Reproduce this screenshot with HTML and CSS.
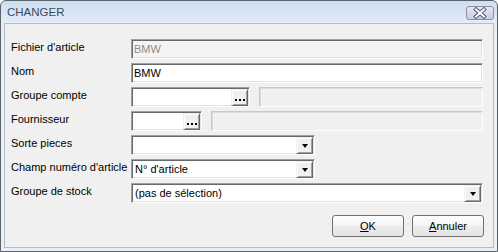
FILE: index.html
```html
<!DOCTYPE html>
<html lang="fr">
<head>
<meta charset="utf-8">
<title>CHANGER</title>
<link rel="stylesheet" href="styles.css">
</head>
<body>
<div class="window">
  <div class="titlebar">
    <span class="title">CHANGER</span>
    <span class="close">
      <svg width="28" height="14" viewBox="0 0 28 14">
        <path d="M10 3.5 L18 10.5 M18 3.5 L10 10.5" stroke="#555a6c" stroke-width="4" stroke-linecap="square" fill="none"/>
        <path d="M10 3.5 L18 10.5 M18 3.5 L10 10.5" stroke="#ffffff" stroke-width="2" stroke-linecap="square" fill="none"/>
      </svg>
    </span>
  </div>
  <div class="client">
    <div class="form">
      <div class="label">Fichier d'article</div>
      <div class="field disabled">BMW</div>

      <div class="label">Nom</div>
      <div class="field">BMW</div>

      <div class="label">Groupe compte</div>
      <div class="pair">
        <div class="field lookup w-gc"><span class="val"></span><span class="btn dots"><i></i><i></i><i></i></span></div>
        <div class="field flat"></div>
      </div>

      <div class="label">Fournisseur</div>
      <div class="pair">
        <div class="field lookup w-f"><span class="val"></span><span class="btn dots"><i></i><i></i><i></i></span></div>
        <div class="field flat"></div>
      </div>

      <div class="label">Sorte pieces</div>
      <div class="row-left">
        <div class="field combo w-c"><span class="val"></span><span class="btn arrow"><b></b></span></div>
      </div>

      <div class="label">Champ numéro d'article</div>
      <div class="row-left">
        <div class="field combo w-c"><span class="val">N° d'article</span><span class="btn arrow"><b></b></span></div>
      </div>

      <div class="label">Groupe de stock</div>
      <div class="field combo"><span class="val">(pas de sélection)</span><span class="btn arrow"><b></b></span></div>
    </div>
    <div class="actions">
      <button class="pbtn"><u>O</u>K</button>
      <button class="pbtn"><u>A</u>nnuler</button>
    </div>
  </div>
</div>
</body>
</html>
```

FILE: styles.css
```css
* { box-sizing: border-box; }
html, body { margin: 0; padding: 0; }
body {
  width: 498px;
  height: 252px;
  font-family: "Liberation Sans", Arial, sans-serif;
  font-size: 11px;
  color: #000;
  background: #ffffff;
}
.window {
  width: 498px;
  height: 252px;
  border: 1px solid #5d636b;
  border-radius: 6px 6px 0 0;
  background: linear-gradient(#cedff1 0px, #d8e6f4 12px, #e4edf8 22px, #e9f0f8 40px);
  padding: 0 3px 3px 3px;
  display: flex;
  flex-direction: column;
}
.titlebar {
  height: 22px;
  display: flex;
  align-items: flex-start;
  justify-content: space-between;
  margin: 0 -3px;
  padding: 0 3px 0 3px;
}
.title {
  font-size: 11.5px;
  color: #3c4a5c;
  padding: 5px 0 0 3px;
}
.close {
  width: 28px;
  height: 14px;
  margin-top: 5px;
  border: 1px solid #8b8fa3;
  border-radius: 3px;
  background: linear-gradient(#e6e6f3, #cacce2);
  display: flex;
  align-items: center;
  justify-content: center;
  overflow: hidden;
}
.close svg { display: block; flex: none; }
.client {
  flex: 1;
  border: 1px solid #b4bcc6;
  background: #f0f0f0;
  padding: 15px 10px 0 6px;
  display: flex;
  flex-direction: column;
}
.form {
  display: grid;
  grid-template-columns: 120px 1fr;
  grid-auto-rows: 20px;
  row-gap: 4px;
}
.label {
  padding-top: 2px;
  line-height: 13px;
  white-space: nowrap;
}
.field {
  height: 20px;
  border: 1px solid;
  border-color: #a0a0a0 #ffffff #ffffff #a0a0a0;
  box-shadow: inset 1px 1px 0 #696969, inset -1px -1px 0 #e3e3e3;
  background: #ffffff;
  padding: 1px 3px 0 2px;
  line-height: 16px;
  white-space: nowrap;
  display: flex;
  align-items: flex-start;
}
.field.disabled {
  background: #f4f4f4;
  color: #8e8e8e;
}
.field.flat {
  flex: 1;
  background: #f0f0f0;
  border-color: #c8c8c8 #ffffff #ffffff #c8c8c8;
  box-shadow: inset 1px 1px 0 #dcdcdc;
}
.pair {
  display: flex;
  gap: 9px;
}
.row-left { display: flex; }
.w-gc { width: 119px; }
.w-f { width: 71px; }
.w-c { width: 184px; }
.lookup, .combo {
  padding: 1px 1px 1px 2px;
}
.combo .val { padding-left: 1px; }
.val { flex: 1; overflow: hidden; line-height: 16px; }
.btn {
  flex: none;
  width: 17px;
  height: 17px;
  background: #f0f0f0;
  border: 1px solid;
  border-color: #f0f0f0 #696969 #696969 #f0f0f0;
  box-shadow: inset 1px 1px 0 #ffffff, inset -1px -1px 0 #a0a0a0;
  display: flex;
  justify-content: center;
}
.dots {
  align-items: flex-end;
  gap: 2px;
  padding-bottom: 4px;
}
.dots i {
  display: block;
  width: 2px;
  height: 2px;
  background: #000;
}
.arrow {
  align-items: center;
  padding-top: 1px;
}
.arrow b {
  display: block;
  width: 0;
  height: 0;
  border-left: 3.5px solid transparent;
  border-right: 3.5px solid transparent;
  border-top: 4px solid #000;
}
.actions {
  display: flex;
  justify-content: flex-end;
  gap: 8px;
  margin-top: 12px;
  margin-right: -1px;
}
.pbtn {
  width: 72px;
  height: 22px;
  border: 1px solid #707070;
  border-radius: 3px;
  background: linear-gradient(#fcfcfc 0%, #f5f5f5 50%, #ececec 51%, #e4e4e4 100%);
  font-family: "Liberation Sans", Arial, sans-serif;
  font-size: 11px;
  color: #000;
  padding: 0;
  line-height: 18px;
}
.pbtn u { text-decoration: underline; text-underline-offset: 1px; }
```
